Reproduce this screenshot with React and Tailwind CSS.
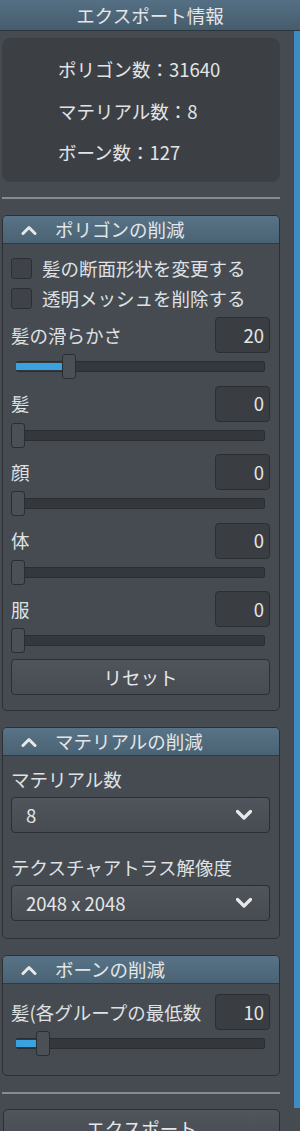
import React from "react";

const font = { fontFamily: '"Noto Sans CJK JP", "Noto Sans", sans-serif' };

function ChevronUp() {
  return (
    <svg width="16" height="12" viewBox="0 0 16 12" className="shrink-0">
      <polyline points="2,9.5 8,3.5 14,9.5" fill="none" stroke="#e8e8e8" strokeWidth="3" strokeLinecap="round" strokeLinejoin="round" />
    </svg>
  );
}

function ChevronDown() {
  return (
    <svg width="18" height="12" viewBox="0 0 18 12" className="shrink-0">
      <polyline points="2.5,2.5 9,9 15.5,2.5" fill="none" stroke="#e8e8e8" strokeWidth="3.2" strokeLinecap="round" strokeLinejoin="round" />
    </svg>
  );
}

function Section({ title, children, bodyClass }) {
  return (
    <div className="rounded-[5px] border border-[#2c3035] bg-[#464b52] overflow-hidden">
      <div className="h-[28px] flex items-center pl-[18px] gap-[18px] bg-[linear-gradient(to_bottom,#587386,#4a6374)] border-b border-[#2e3a44] text-[18.5px] leading-none text-[#e4e6e8]">
        <ChevronUp />
        <span>{title}</span>
      </div>
      <div className={bodyClass}>{children}</div>
    </div>
  );
}

function Checkbox({ label }) {
  return (
    <div className="h-[30px] shrink-0 flex items-center gap-[10px]">
      <div className="w-[21px] h-[21px] rounded-[3px] bg-[#3f4349] border border-[#2b2f33]" />
      <span className="text-[18.5px] leading-none text-[#dfe1e3]">{label}</span>
    </div>
  );
}

function Slider({ label, value, pos }) {
  return (
    <div className="flex flex-col shrink-0">
      <div className="h-[36px] flex items-center justify-between">
        <span className="text-[18.5px] leading-none text-[#dfe1e3]">{label}</span>
        <div className="w-[55px] h-[36px] rounded-[4px] bg-[#3a3e43] border border-[#2b2e32] flex items-center justify-end pr-[5px] text-[18.5px] leading-none text-[#e4e6e8]">
          {value}
        </div>
      </div>
      <div className="relative h-[26px] mt-[1px]">
        <div className="absolute left-[5px] right-[5px] top-[7px] h-[11px] rounded-[2px] bg-[#34383d] border border-[#2a2d31]" />
        {pos > 0 && (
          <div className="absolute left-[5px] top-[9px] h-[7px] bg-[#3aa2de]" style={{ width: pos - 5 }} />
        )}
        <div
          className="absolute top-0 w-[14px] h-[25px] rounded-[3px] bg-[#4b5057] border border-[#2a2d31]"
          style={{ left: pos }}
        />
      </div>
    </div>
  );
}

function Select({ value }) {
  return (
    <div className="h-[36px] shrink-0 rounded-[4px] border border-[#2b2e32] bg-[linear-gradient(to_bottom,#50555c,#474c52)] flex items-center justify-between pl-[14px] pr-[16px] text-[18.5px] leading-none text-[#e4e6e8]">
      <span>{value}</span>
      <ChevronDown />
    </div>
  );
}

export default function App() {
  return (
    <div className="w-[300px] h-[1131px] overflow-hidden bg-[#464b51] text-[#dfe1e3] flex flex-col" style={font}>
      <div className="h-[31px] shrink-0 flex items-center justify-center bg-[linear-gradient(to_bottom,#557084,#465c6c)] border-b border-[#2a3640] text-[18.5px] leading-none text-[#e4e6e8]">
        エクスポート情報
      </div>
      <div className="flex flex-1 min-h-0">
        <div className="w-[278px] ml-[2px] pt-[7px]">
          <div className="h-[144px] rounded-[8px] bg-[#3c4045] pl-[56px] pt-[11px] text-[18.5px] leading-[41.5px] text-[#e2e4e6]">
            <div>ポリゴン数：31640</div>
            <div>マテリアル数：8</div>
            <div>ボーン数：127</div>
          </div>
          <div className="h-[2px] bg-[#878b90] mt-[15px]" />
          <div className="mt-[16px]">
            <Section title="ポリゴンの削減" bodyClass="pl-[8px] pr-[9px] pt-[9px] pb-[15px] flex flex-col">
              <Checkbox label="髪の断面形状を変更する" />
              <Checkbox label="透明メッシュを削除する" />
              <div className="flex flex-col gap-[5.5px] mt-[4px]">
                <Slider label="髪の滑らかさ" value="20" pos={51} />
                <Slider label="髪" value="0" pos={0} />
                <Slider label="顔" value="0" pos={0} />
                <Slider label="体" value="0" pos={0} />
                <Slider label="服" value="0" pos={0} />
              </div>
              <div className="mt-[5px] h-[36px] shrink-0 rounded-[4px] border border-[#2b2e32] bg-[linear-gradient(to_bottom,#50555c,#474c52)] flex items-center justify-center text-[18.5px] leading-none text-[#e4e6e8]">
                リセット
              </div>
            </Section>
          </div>
          <div className="mt-[16px]">
            <Section title="マテリアルの削減" bodyClass="pl-[8px] pr-[9px] pt-[5px] pb-[17px] flex flex-col">
              <div className="h-[36px] flex items-center text-[18.5px] leading-none">マテリアル数</div>
              <Select value="8" />
              <div className="h-[36px] mt-[16px] flex items-center text-[18.5px] leading-none">テクスチャアトラス解像度</div>
              <Select value="2048 x 2048" />
            </Section>
          </div>
          <div className="mt-[16px]">
            <Section title="ボーンの削減" bodyClass="pl-[8px] pr-[9px] pt-[10px] pb-[18px] flex flex-col">
              <Slider label="髪(各グループの最低数" value="10" pos={25} />
            </Section>
          </div>
          <div className="h-[2px] bg-[#878b90] mt-[16px]" />
          <div className="mt-[15px] ml-[1px] h-[38px] rounded-[5px] border border-[#2b2e32] bg-[linear-gradient(to_bottom,#50555c,#474c52)] flex items-center justify-center text-[18.5px] leading-none text-[#e4e6e8]">
            エクスポート
          </div>
        </div>
        <div className="ml-auto w-[6px] flex flex-col">
          <div className="h-[1077px] bg-[#3d8cc4]" />
        </div>
      </div>
    </div>
  );
}
